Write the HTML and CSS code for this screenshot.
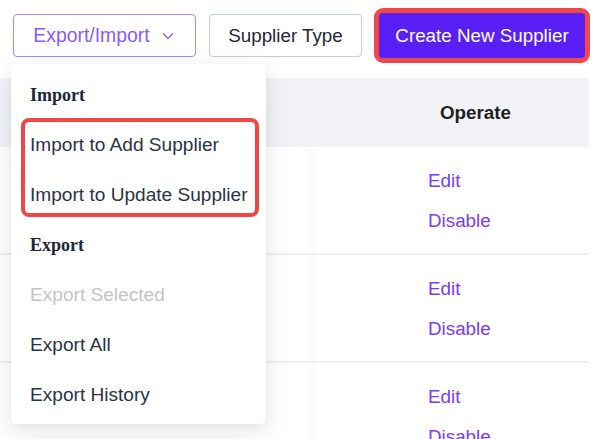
FILE: index.html
```html
<!DOCTYPE html>
<html>
<head>
<meta charset="utf-8">
<link rel="stylesheet" href="styles.css">
</head>
<body>
<div class="page">
  <div class="toolbar">
    <button class="btn btn-outline-purple">Export/Import
      <svg class="chev" width="12" height="8" viewBox="0 0 12 8"><path d="M1 1.5 L6 6.5 L11 1.5" fill="none" stroke="currentColor" stroke-width="1.3"/></svg>
    </button>
    <button class="btn btn-outline">Supplier Type</button>
    <div class="hl-btn"><button class="btn btn-primary">Create New Supplier</button></div>
  </div>

  <div class="table">
    <div class="thead">
      <div class="col-main"></div>
      <div class="col-op"><span class="th">Operate</span></div>
    </div>
    <div class="row">
      <div class="col-main"></div>
      <div class="col-op"><a class="link">Edit</a><a class="link">Disable</a></div>
    </div>
    <div class="row">
      <div class="col-main"></div>
      <div class="col-op"><a class="link">Edit</a><a class="link">Disable</a></div>
    </div>
    <div class="row">
      <div class="col-main"></div>
      <div class="col-op"><a class="link">Edit</a><a class="link">Disable</a></div>
    </div>
  </div>

  <div class="menu">
    <div class="menu-group">Import</div>
    <div class="menu-item">Import to Add Supplier</div>
    <div class="menu-item">Import to Update Supplier</div>
    <div class="menu-group">Export</div>
    <div class="menu-item disabled">Export Selected</div>
    <div class="menu-item">Export All</div>
    <div class="menu-item">Export History</div>
    <div class="menu-hl"></div>
  </div>
</div>
</body>
</html>
```
FILE: styles.css
```css
html, body {
  margin: 0;
  padding: 0;
  background: #ffffff;
}
.page {
  position: relative;
  width: 600px;
  height: 439px;
  overflow: hidden;
  font-family: "Liberation Sans", Arial, sans-serif;
}
.toolbar {
  display: flex;
  align-items: center;
  padding: 8px 0 0 13px;
  height: 55px;
}
.btn {
  font-family: "Liberation Sans", Arial, sans-serif;
  font-size: 18.8px;
  height: 43px;
  border-radius: 4px;
  background: #fff;
  display: flex;
  align-items: center;
  justify-content: center;
  padding: 0;
  box-sizing: border-box;
}
.btn-outline-purple {
  width: 183px;
  border: 1.5px solid #a58af6;
  color: #8a5cf5;
  font-size: 19.4px;
  gap: 12px;
  padding-right: 2px;
}
.chev { margin-top: 1px; }
.btn-outline {
  width: 153px;
  margin-left: 13px;
  border: 1.5px solid #c3ccd8;
  color: #1f2733;
}
.hl-btn {
  margin-left: 12px;
  border: 5px solid #f04848;
  border-radius: 9px;
  display: flex;
}
.btn-primary {
  width: 206px;
  height: 45px;
  border: none;
  background: #5a1ff6;
  color: #ffffff;
  border-radius: 3px;
}
.table {
  margin-top: 15px;
  width: 589px;
}
.thead, .row {
  display: flex;
}
.thead {
  height: 69px;
  background: #f2f3f7;
}
.row {
  height: 106px;
  border-bottom: 2px solid #eeeff1;
}
.thead .col-op {
  display: flex;
  align-items: center;
  padding-left: 125px;
}
.col-main { width: 315px; }
.col-op {
  flex: 1;
  position: relative;
  padding-left: 113px;
}
.row .col-op::before {
  content: "";
  position: absolute;
  left: -15px;
  top: 0;
  bottom: 0;
  width: 15px;
  background: linear-gradient(to right, rgba(0,0,0,0), rgba(0,0,0,0.02));
}
.th {
  font-size: 18.8px;
  font-weight: bold;
  color: #1f1f1f;
}
.row .col-op {
  display: flex;
  flex-direction: column;
  gap: 19px;
  padding-top: 23px;
  box-sizing: border-box;
}
.link {
  font-size: 18.8px;
  color: #7a3bf5;
  line-height: 21px;
}
.menu {
  position: absolute;
  left: 11px;
  top: 64px;
  width: 255px;
  height: 360px;
  box-sizing: border-box;
  padding: 6px 0 4px 0;
  background: #fff;
  border-radius: 5px;
  box-shadow: 0 8px 28px rgba(0,0,0,0.10), 0 2px 8px rgba(0,0,0,0.04);
}
.menu-group, .menu-item {
  height: 50px;
  display: flex;
  align-items: center;
  padding-left: 19px;
}
.menu-group {
  font-family: "Liberation Serif", "Times New Roman", serif;
  font-weight: bold;
  font-size: 18px;
  color: #1e2637;
}
.menu-item {
  font-size: 19.1px;
  color: #2a3347;
}
.menu-item.disabled {
  color: #c4c4c6;
}
.menu-hl {
  position: absolute;
  left: 10px;
  top: 54px;
  width: 238px;
  height: 99px;
  box-sizing: border-box;
  border: 4px solid #ef4646;
  border-radius: 8px;
}
```
